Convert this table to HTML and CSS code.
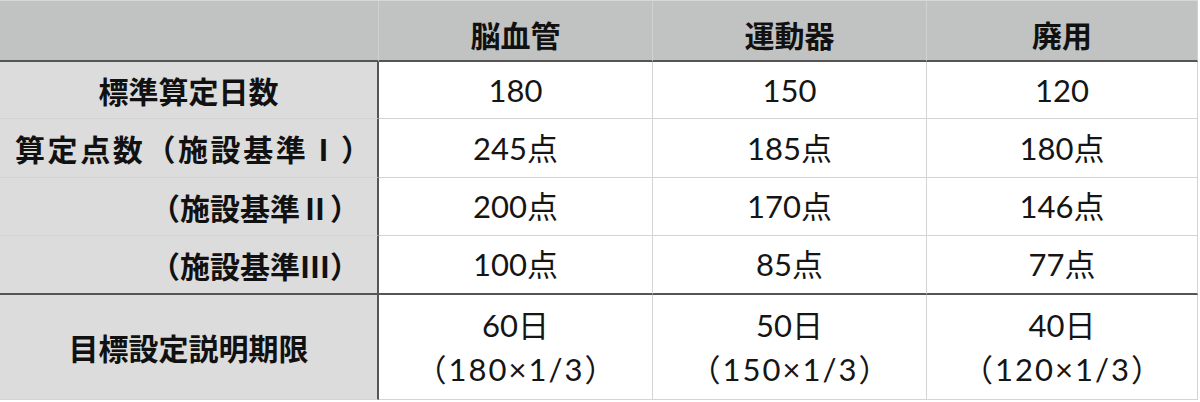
FILE: index.html
```html
<!DOCTYPE html>
<html lang="ja">
<head>
<meta charset="utf-8">
<link rel="stylesheet" href="styles.css">
</head>
<body>
<div class="table">
  <div class="row head">
    <div class="cell label"></div>
    <div class="cell c1">脳血管</div>
    <div class="cell c2">運動器</div>
    <div class="cell c3">廃用</div>
  </div>
  <div class="row r1">
    <div class="cell label">標準算定日数</div>
    <div class="cell c1 num">180</div>
    <div class="cell c2 num">150</div>
    <div class="cell c3 num">120</div>
  </div>
  <div class="row r2">
    <div class="cell label long">算定点数（施設基準Ⅰ）</div>
    <div class="cell c1 num">245点</div>
    <div class="cell c2 num">185点</div>
    <div class="cell c3 num">180点</div>
  </div>
  <div class="row r3">
    <div class="cell label right">（施設基準Ⅱ）</div>
    <div class="cell c1 num">200点</div>
    <div class="cell c2 num">170点</div>
    <div class="cell c3 num">146点</div>
  </div>
  <div class="row r4">
    <div class="cell label right">（施設基準Ⅲ）</div>
    <div class="cell c1 num">100点</div>
    <div class="cell c2 num">85点</div>
    <div class="cell c3 num">77点</div>
  </div>
  <div class="row r5">
    <div class="cell label">目標設定説明期限</div>
    <div class="cell c1 num two"><span>60日</span><span class="calc">（180×1/3）</span></div>
    <div class="cell c2 num two"><span>50日</span><span class="calc">（150×1/3）</span></div>
    <div class="cell c3 num two"><span>40日</span><span class="calc">（120×1/3）</span></div>
  </div>
</div>
</body>
</html>
```

FILE: styles.css
```css
html, body {
  margin: 0;
  padding: 0;
  background: #ffffff;
}

.table {
  width: 1198px;
  border-top: 1px solid #d6d8d7;
  font-family: "Noto Sans CJK JP", "Noto Sans", sans-serif;
  color: #111111;
}

.row {
  display: grid;
  grid-template-columns: 379px 274px 274px 271px;
}

.cell {
  box-sizing: border-box;
  display: flex;
  align-items: center;
  justify-content: center;
  border-right: 1px solid #d4d4d4;
  border-bottom: 1px solid #d4d4d4;
  font-size: 30px;
  line-height: 1;
  white-space: nowrap;
}

.label {
  background: #dcdcdc;
  border-right: 2px solid #555555;
  font-weight: 700;
}

.head .cell {
  background: #c1c3c2;
  font-weight: 700;
  border-bottom: 2px solid #555555;
  border-right-color: #cfd1d0;
  padding-top: 6px;
}

.head .label {
  border-right: 1px solid #cfd1d0;
  padding-right: 1px;
}

.head { height: 61px; }
.r1 { height: 57px; }
.r2 { height: 59px; }
.r3 { height: 58px; }
.r4 { height: 59px; }
.r5 { height: 105px; }

.row .cell { height: 100%; }

.r4 .cell { border-bottom: 2px solid #555555; }

.num {
  font-family: "Lato", "Noto Sans CJK JP", sans-serif;
  font-size: 31px;
  font-weight: 400;
  color: #151515;
}

.right {
  justify-content: flex-end;
  padding-right: 17px;
}

.long {
  justify-content: flex-start;
  padding-left: 15px;
  letter-spacing: 2.6px;
}

.two {
  flex-direction: column;
  line-height: 44px;
}

.calc {
  letter-spacing: 2px;
  margin-right: -2px;
}
```
